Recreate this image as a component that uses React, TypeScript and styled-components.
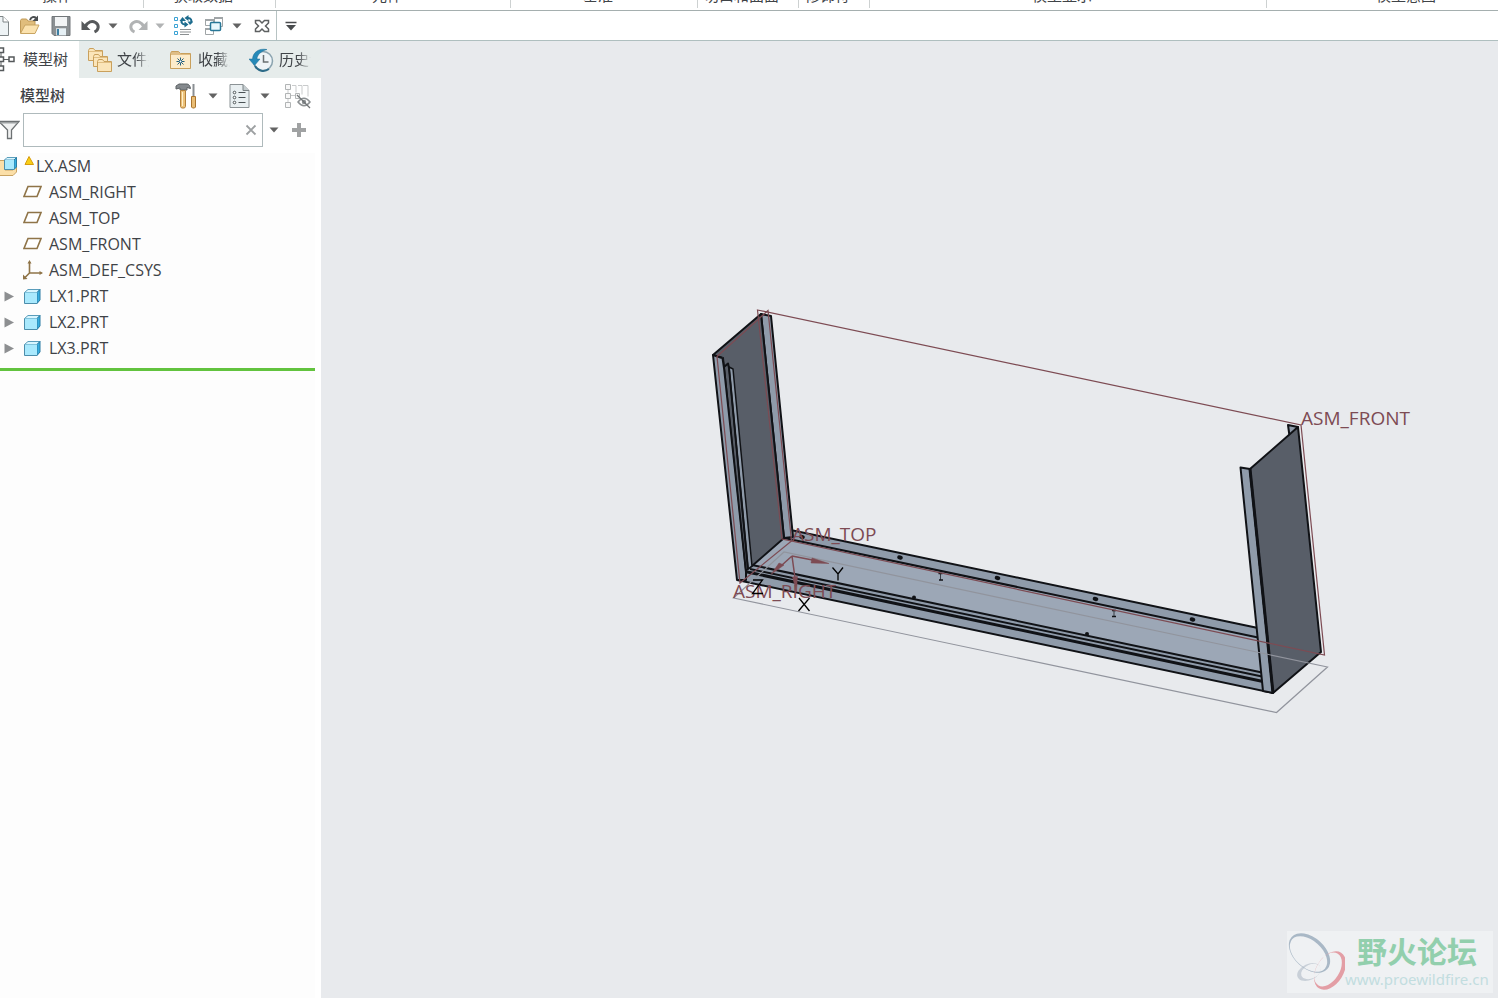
import React, { useState } from 'react';
import styled, { createGlobalStyle } from 'styled-components';

const GlobalStyle = createGlobalStyle`
  * { box-sizing: border-box; }
  html, body { margin: 0; background: #e8eaed; }
  body, button, input {
    font-family: "Open Sans", "Noto Sans CJK SC", sans-serif;
    font-size: 15px;
    color: #3f4347;
  }
  button { padding: 0; border: 0; background: none; cursor: pointer; }
  svg { display: block; flex: none; }
`;

const Page = styled.div`
  display: flex;
  flex-direction: column;
  height: 100vh;
  overflow: hidden;
`;

const Ribbon = styled.div`
  display: flex;
  flex: none;
  height: 11px;
  overflow: hidden;
  background: #fff;
  border-bottom: 1px solid #a5afaf;
`;

const RibbonGroup = styled.div<{ $width?: number; $inset: number }>`
  display: flex;
  align-items: flex-end;
  flex: ${p => (p.$width ? `none` : '1')};
  width: ${p => (p.$width ? `${p.$width}px` : 'auto')};
  height: 8px;
  padding: 0 0 3px ${p => p.$inset}px;
  border-right: 1px solid #cdd1d1;
  line-height: 20px;
  white-space: nowrap;
  &:last-child { border-right: 0; }
`;

const Toolbar = styled.div`
  display: flex;
  align-items: center;
  flex: none;
  height: 30px;
  background: #fff;
  border-bottom: 1px solid #afbfbf;
`;

const ToolButton = styled.button<{ $width: number }>`
  display: flex;
  align-items: center;
  justify-content: center;
  flex: none;
  width: ${p => p.$width}px;
  height: 29px;
  overflow: hidden;
`;

const ToolDivider = styled.div`
  width: 1px;
  align-self: stretch;
  background: #b7c3c3;
`;

const Body = styled.div`
  display: flex;
  flex: 1;
  min-height: 0;
`;

const SidePanel = styled.aside`
  display: flex;
  flex-direction: column;
  flex: none;
  width: 321px;
  background: #fff;
`;

const Tabs = styled.div`
  display: flex;
  height: 37px;
  background: #e6eceb;
`;

const Tab = styled.button<{ $width: number; $active?: boolean }>`
  display: flex;
  align-items: center;
  flex: none;
  gap: ${p => (p.$active ? 8 : 5)}px;
  width: ${p => p.$width}px;
  padding-left: ${p => (p.$active ? 0 : 9)}px;
  background: ${p => (p.$active ? '#fff' : 'transparent')};
  line-height: 20px;
`;

const TabLabel = styled.span<{ $clipped?: boolean }>`
  width: ${p => (p.$clipped ? '32px' : 'auto')};
  padding-bottom: 2px;
  overflow: hidden;
  white-space: nowrap;
  ${p => p.$clipped && 'mask-image: linear-gradient(90deg, #000 60%, transparent);'}
`;

const PanelHeader = styled.div`
  display: flex;
  align-items: center;
  height: 35px;
`;

const PanelTitle = styled.h2`
  width: 172px;
  margin: 0;
  padding: 0 0 2px 20px;
  font-size: 15px;
  font-weight: 500;
  line-height: 20px;
`;

const SearchRow = styled.div`
  display: flex;
  align-items: center;
  height: 34px;
`;

const FilterSlot = styled.div`
  width: 23px;
`;

const SearchField = styled.div`
  display: flex;
  align-items: center;
  width: 240px;
  height: 34px;
  border: 1px solid #afbabc;
  background: #fff;
`;

const SearchInput = styled.input`
  flex: 1;
  min-width: 0;
  height: 30px;
  padding: 0 6px;
  border: 0;
  outline: 0;
  background: transparent;
`;

const Tree = styled.ul`
  flex: 1;
  width: 315px;
  margin: 6px 0 0;
  padding: 0;
  list-style: none;
  background: #fdfdfd;
  font-size: 16px;
`;

const TreeRow = styled.li<{ $root?: boolean }>`
  display: flex;
  align-items: center;
  gap: ${p => (p.$root ? 2 : 7)}px;
  height: 26px;
  line-height: 20px;
`;

const TreeLeafRow = styled(TreeRow)`
  padding-left: 23px;
`;

const Expander = styled.button`
  display: flex;
  align-items: center;
  flex: none;
  width: 16px;
  height: 20px;
  padding-left: 4px;
`;

const InsertMarker = styled.li`
  height: 3px;
  margin-top: 7px;
  background: #62c33e;
`;

const Viewport = styled.main`
  position: relative;
  flex: 1;
  min-width: 0;
  overflow: hidden;
  background: #e8eaed;
`;

const Scene = styled.svg`
  width: 100%;
  height: 100%;
  font-family: "Open Sans", sans-serif;
  font-size: 19px;
`;

const Watermark = styled.div`
  position: absolute;
  right: 5px;
  bottom: 5px;
  display: flex;
  width: 206px;
  height: 62px;
  background: #eff1f3;
`;

const WatermarkText = styled.div`
  display: flex;
  flex-direction: column;
  align-items: flex-start;
`;

const WatermarkName = styled.strong`
  padding: 2px 0 2px 12px;
  font: 700 30px/34px "Noto Sans CJK SC", sans-serif;
  color: #92cfad;
`;

const WatermarkUrl = styled.a`
  font: 15px/20px "Noto Sans", sans-serif;
  color: #c2dddf;
  text-decoration: none;
`;

const Caret = ({ color = '#636363' }: { color?: string }) => (
  <svg width="10" height="6" viewBox="0 0 10 6"><path d="M0.5 0.5h9L5 5.5z" fill={color} /></svg>
);

const NewIcon = () => (
  <svg width="14" height="22" viewBox="0 0 14 22">
    <path d="M-6 1.500H3L8.500 7V20.500H-6z" fill="#eef3f5" stroke="#7e8587" />
    <path d="M3 1.500V7h5.500" fill="#fff" stroke="#7e8587" />
  </svg>
);

const OpenIcon = () => (
  <svg width="22" height="22" viewBox="0 0 22 22">
    <path d="M1.500 18V5.500l1-1.500h5l1.500 2h7v4" fill="#e0bd7c" stroke="#c09a57" />
    <path d="M1.500 18.500L6 10h14l-4 8.500z" fill="#fbe2ae" stroke="#c9a562" />
    <path d="M11 5c1-3 4-4 6-2" fill="none" stroke="#4a4e50" strokeWidth="2" />
    <path d="M19 0.500V6h-5.500z" fill="#4a4e50" />
  </svg>
);

const SaveIcon = () => (
  <svg width="20" height="22" viewBox="0 0 20 22">
    <path d="M1 1.500h18v19H3l-2-2z" fill="#8b9093" stroke="#72777a" />
    <path d="M4 2h12v9H4z" fill="#f2f4f5" />
    <path d="M5 13h10v7.500H5z" fill="#cfd5d8" />
    <path d="M6 14h4v6H6z" fill="#3c7fa3" /><path d="M8 14h7v6H8z" fill="#e6f0f5" />
  </svg>
);

const UndoIcon = ({ color = '#56595b', flip = false }: { color?: string; flip?: boolean }) => (
  <svg width="20" height="18" viewBox="0 0 20 18">
    <g transform={flip ? 'translate(20 0) scale(-1 1)' : undefined}>
      <path d="M4 10C7 4.500 11 3.500 14.500 5.500c4 2.500 3.500 7.500-1 9.500" fill="none" stroke={color} strokeWidth="3" />
      <path d="M0.500 4v9h9z" fill={color} />
    </g>
  </svg>
);

const RegenerateIcon = () => (
  <svg width="20" height="22" viewBox="0 0 20 22">
    <g fill="#fff" stroke="#3ba2d4"><path d="M1.500 2.500h3v3h-3zM1.500 9.500h3v3h-3zM1.500 16.500h3v3h-3z" /></g>
    <path d="M7 14.500h11M7 17h11M7 19.500h9" stroke="#8b8f91" strokeWidth="1.200" />
    <path d="M12 9.500C8.500 9.500 8 7 9 4.500M15 3c3 0 4 2.500 3 5" fill="none" stroke="#1d6c8e" strokeWidth="2" />
    <path d="M6.500 6l3-4 3.500 4zM11.500 6.500l4 3-4 3zM15.500 0v6l-4-3zM14.500 6.500h6L17 10z" fill="#1d6c8e" />
  </svg>
);

const WindowsIcon = () => (
  <svg width="20" height="20" viewBox="0 0 20 20">
    <g fill="#fff" stroke="#a0a5a7"><path d="M1.500 3.500h8v6h-8zM10.500 1.500h8v9h-8zM1.500 12.500h8v6h-8z" /></g>
    <path d="M1 4h9M10 2h9M1 13h9" stroke="#a0a5a7" strokeWidth="2" />
    <rect x="6.500" y="6.500" width="10" height="8" rx="1" fill="#e9f7fc" stroke="#287797" strokeWidth="1.500" />
  </svg>
);

const CloseWindowIcon = () => (
  <svg width="16" height="14" viewBox="0 0 16 14">
    <path d="M1.500 1.500h4L8 4l2.500-2.500h4V4l-3 3 3 3v2.500h-4L8 10l-2.500 2.500h-4V10l3-3-3-3z" fill="#fff" stroke="#5d6061" strokeWidth="1.500" />
  </svg>
);

const MoreIcon = () => (
  <svg width="12" height="10" viewBox="0 0 12 10">
    <path d="M0.500 1.500h11" stroke="#484b4d" strokeWidth="1.500" /><path d="M1 4h10L6 9.500z" fill="#484b4d" />
  </svg>
);

const ModelTreeIcon = () => (
  <svg width="15" height="26" viewBox="0 0 15 26">
    <path d="M1 3v17M1 12.500h8" stroke="#5d6163" />
    <g fill="#fff" stroke="#55595b" strokeWidth="1.500"><path d="M-2 1h5.500v4.500H-2zM-2 10h5.500v4.500H-2zM-2 19h5.500v4.500H-2zM9 10h5v4.500H9z" /></g>
  </svg>
);

const FoldersIcon = () => (
  <svg width="24" height="24" viewBox="0 0 24 24">
    {[[0, 0], [5, 6], [9, 11]].map(([x, y]) => (
      <g key={x} transform={`translate(${x} ${y})`}>
        <path d="M0.500 2.500l1-2h4l1.500 2h7.500v10h-14z" fill="#fbe5b9" stroke="#c9a05c" />
        <path d="M1 3.500h13" stroke="#e1bf83" />
      </g>
    ))}
  </svg>
);

const FavoriteIcon = () => (
  <svg width="24" height="22" viewBox="0 0 24 22">
    <path d="M1.500 4.500l1-2h7l2 2h10v15h-20z" fill="#e0be85" stroke="#c9a05c" />
    <path d="M2 6h19v13H2z" fill="#fdecca" />
    <path d="M11.500 8.500v8M7.500 12.500h8M8.500 9.500l6 6M14.500 9.500l-6 6" stroke="#245f7c" />
    <circle cx="11.500" cy="12.500" r="1" fill="#fff" />
  </svg>
);

const HistoryIcon = () => (
  <svg width="25" height="24" viewBox="0 0 25 24">
    <circle cx="14" cy="13" r="9.500" fill="#eef4f7" stroke="#8aa3af" strokeWidth="1.500" />
    <path d="M14.500 7v7h5" fill="none" stroke="#6a7073" strokeWidth="1.500" />
    <path d="M18 1.500C10 0 4 4 3.500 11H0l5.500 6.500L11 11H8c0-4 4-8 10-9.500z" fill="#2589b8" stroke="#1b6c95" strokeWidth="0.500" />
    <path d="M6 18c3 5 9 6.500 14 3" fill="none" stroke="#2d6b88" strokeWidth="2" />
  </svg>
);

const ToolsIcon = () => (
  <svg width="22" height="26" viewBox="0 0 22 26">
    <path d="M1 3l3-2h8c2 0 3 2 3.500 4.500L12 4.500V7H5V5L1 6z" fill="#858a8e" stroke="#5d6265" />
    <path d="M5.500 7.500h5v16l-1 1.500h-3l-1-1.500z" fill="#ecc27a" stroke="#b3813d" />
    <path d="M7.500 9v14" stroke="#fff0cd" />
    <path d="M18.500 1v12" stroke="#8a8f93" strokeWidth="2" />
    <path d="M16.500 13.500h4V24l-1 1h-2l-1-1z" fill="#e9bd75" stroke="#a9742e" />
  </svg>
);

const SettingsListIcon = () => (
  <svg width="21" height="26" viewBox="0 0 21 26">
    <path d="M1 1.500h13l6 6v17H1z" fill="#e9eff1" stroke="#8b9295" />
    <path d="M14 1.500v6h6" fill="#c4cccf" stroke="#7b8285" />
    <path d="M9.500 9.500h7M9.500 14.500h7M9.500 19.500h7" stroke="#4c5356" />
    <g fill="#fff" stroke="#4c5356"><circle cx="5.500" cy="9.500" r="1.300" /><circle cx="5.500" cy="14.500" r="1.300" /><circle cx="5.500" cy="19.500" r="1.300" /></g>
  </svg>
);

const HideTreeIcon = () => (
  <svg width="28" height="26" viewBox="0 0 28 26">
    <path d="M8 2.500h4v7M14 2.500h4v9M19 2.500h5v11M4 6v15M7 12.500h5" fill="none" stroke="#c9cbcc" />
    <g fill="#f8f8f8" stroke="#b1b4b5"><path d="M1.500 1.500h5v5h-5zM1.500 10.500h5v5h-5zM1.500 19.500h5v5h-5zM11.500 10.500h4v5h-4z" /></g>
    <path d="M14 19c4-5 8-5 12 0-4 5-8 5-12 0z" fill="#fff" stroke="#8c9092" strokeWidth="1.500" />
    <circle cx="20" cy="19" r="2.200" fill="#8c9092" />
    <path d="M13 12l13 13" stroke="#707476" strokeWidth="1.200" />
  </svg>
);

const FilterIcon = () => (
  <svg width="20" height="20" viewBox="0 0 20 20">
    <path d="M-1 1.500h20L11.500 10v8.500h-4V10z" fill="#f1f2f2" stroke="#6d7173" strokeWidth="1.300" />
    <path d="M0 2h18l-1.500 1.500H1z" fill="#9ea2a3" />
  </svg>
);

const ClearIcon = () => (
  <svg width="12" height="12" viewBox="0 0 12 12"><path d="M1.500 1.500l9 9M10.500 1.500l-9 9" stroke="#9da0a2" strokeWidth="1.800" /></svg>
);

const PlusIcon = () => (
  <svg width="14" height="14" viewBox="0 0 14 14"><path d="M7 0v14M0 7h14" stroke="#a0a2a3" strokeWidth="4" /></svg>
);

const PartIcon = () => (
  <svg width="19" height="17" viewBox="0 0 19 17">
    <path d="M1.500 4.500L5 1.500h12l-3 3z" fill="#d8f6ff" stroke="#5a9dbb" />
    <path d="M14 4.500l3-3V12l-3 3.500z" fill="#35aee0" stroke="#2c7da3" />
    <path d="M1.500 4.500H14v11H1.500z" fill="#a9e9fd" />
    <path d="M1.500 4.500v11H14" fill="none" stroke="#4b8dab" />
  </svg>
);

const AssemblyIcon = () => (
  <svg width="18" height="20" viewBox="0 0 18 20">
    <path d="M-2 4.500h7V14h8l3.500-4v6L13 19.500H-2z" fill="#fbdfa8" stroke="#c9a362" />
    <path d="M4.500 4L7 1.500h9.500L14 4z" fill="#d8f6ff" stroke="#5a9dbb" />
    <path d="M14 4l2.500-2.500V11L14 13.500z" fill="#35aee0" stroke="#2c7da3" />
    <path d="M4.500 4H14v9.500H4.500z" fill="#a9e9fd" />
    <path d="M4.500 4v9.500H14" fill="none" stroke="#4b8dab" />
  </svg>
);

const WarningIcon = () => (
  <svg width="14" height="20" viewBox="0 0 14 20"><path d="M9 0.500L5 8.500h8.500z" fill="#f8ce16" stroke="#d79c0c" /></svg>
);

const PlaneIcon = () => (
  <svg width="19" height="14" viewBox="0 0 19 14"><path d="M5 1.500h13l-4 10H1z" fill="#fff" stroke="#8f7448" strokeWidth="1.600" /></svg>
);

const CsysIcon = () => (
  <svg width="19" height="20" viewBox="0 0 19 20" overflow="visible">
    <path d="M6.500 2v11M6.500 13h12M6.500 13l-5 5" fill="none" stroke="#8f7448" strokeWidth="1.600" />
    <path d="M6.500 0l2 3.500h-4zM20 13l-3.500-2v4zM0 19.500v-5l4.500 4.500z" fill="#8f7448" />
  </svg>
);

const ExpandIcon = () => (
  <svg width="10" height="11" viewBox="0 0 10 11"><path d="M0.500 0.500v10l9.500-5z" fill="#8d8f91" /></svg>
);

const ringPath = (cx: number, cy: number, rx: number, ry: number, deg: number) => {
  const dx = rx * Math.cos((deg * Math.PI) / 180);
  const dy = rx * Math.sin((deg * Math.PI) / 180);
  return `M${cx - dx} ${cy - dy}A${rx} ${ry} ${deg} 1 0 ${cx + dx} ${cy + dy}A${rx} ${ry} ${deg} 1 0 ${cx - dx} ${cy - dy}z`;
};

const ButterflyLogo = () => (
  <svg width="58" height="62" viewBox="0 0 58 62" fillRule="evenodd">
    <path d={ringPath(22, 41, 12.500, 8, -25) + ringPath(24, 40.500, 10.500, 7, -25)} fill="#c9d0d8" />
    <path d={ringPath(22.500, 22, 24, 15.500, 42) + ringPath(21.500, 23, 22, 13.500, 42)} fill="#a9b8c6" />
    <path d={ringPath(43, 39.500, 21, 13.500, -58) + ringPath(41, 38.500, 18.500, 11.500, -58)} fill="#e39ea5" />
  </svg>
);

const steel = '#8f9baa';
const dark = '#585e68';
const edge = '#101216';
const datum = '#7d4b53';

/* Three-piece sheet-metal frame with its datum planes and coordinate system. */
const Model = () => (
  <Scene role="img" aria-label="LX.ASM">
    <g transform="translate(-321 -41)">
      <g stroke={edge} strokeWidth="2" strokeLinejoin="round">
        <path d="M793 531L1258 628L1273 693L737 580L752 565L784 538z" fill={steel} stroke="none" />
        <path d="M784 538L1258 638L1263 673L752 565z" fill="#9ca7b6" stroke="none" />
        <path d="M793 530.500L1258 628M784 538L1258 637.500M752 565L1262 672.500M750 569L1262 676.500" fill="none" />
        <path d="M745 571.500L1263 681.500" strokeWidth="3" />
        <path d="M737 580L1273 693" />
        <path d="M761 314L771 316L793 537L784 538z" fill={steel} />
        <path d="M713 355L761 314L784 538L752 566L745 571L723 358z" fill={dark} />
        <path d="M713 355L723 358L746 580L737 580z" fill={steel} stroke="none" />
        <path d="M722 358L713 355L737 580H746V572" fill="none" />
        <path d="M729 367L733 369L752 566L748 569z" fill={steel} strokeWidth="1.500" />
        <path d="M722.500 358L724 368L746 572M724 367L728 363.500L729 368L748 569" fill="none" strokeWidth="2" />
        <path d="M1288 425L1298 427L1289.500 436z" fill={steel} />
        <path d="M1240.500 467.500L1250 469L1273 693L1263 691z" fill={steel} />
        <path d="M1250 469L1298 427L1321 652L1273 693z" fill={dark} />
        <path d="M1250 469L1273 693" strokeWidth="3" />
      </g>
      <g fill={edge}>
        {[[802, 537], [900, 557.5], [997.5, 578], [1095.5, 599], [1192.5, 619.5]].map(([x, y]) => (
          <ellipse key={x} cx={x} cy={y} rx="2.800" ry="2" transform={`rotate(15 ${x} ${y})`} />
        ))}
        <circle cx="914" cy="597.500" r="2" /><circle cx="1087" cy="634" r="2" />
      </g>
      <g stroke={edge}>
        <path d="M938.500 573.500h4M939 580h4M1112 610.500h4M1112 616.500h4" strokeWidth="1.500" />
        <path d="M940.500 573v7M1114 610v7" strokeWidth="0.700" />
      </g>
      <path d="M733.500 598L1276.500 712.500L1327.500 667L784 552z" fill="none" stroke="#91949d" strokeWidth="1.200" />
      <g fill="none" stroke={datum} strokeWidth="1.200">
        <path d="M757.500 310L1301 425L1324.500 655L782 539z" />
        <path d="M717 356.500L768 310.500L791.500 541L740 583z" />
      </g>
      <g stroke={datum} fill={datum} strokeWidth="1.500">
        <path d="M792 556L815 560.500M792 556L782 565M792 556L795 578" />
        <path d="M812 558L829 563.500L811 563zM784 565L771 574.500L779 563zM792.500 577L797.500 576.500L796.500 592z" strokeWidth="0.500" />
      </g>
      <g fill={datum}>
        <text x="792" y="541">ASM_TOP</text>
        <text x="733" y="598">ASM_RIGHT</text>
        <text x="1301" y="425">ASM_FRONT</text>
      </g>
      <g fill="none" stroke="#000" strokeWidth="1.300">
        <path d="M832.500 567.500L838 574L843 567.500M838 574V580.500" />
        <path d="M753 580H762.500L752.500 593.500H763" />
        <path d="M799 598L809.500 611M809.500 598L798.500 611" />
      </g>
    </g>
  </Scene>
);

const ribbonGroups = [
  { name: '操作', width: 144, inset: 42 },
  { name: '获取数据', width: 132, inset: 29 },
  { name: '元件', width: 235, inset: 96 },
  { name: '基准', width: 187, inset: 72 },
  { name: '切口和曲面', width: 101, inset: 6 },
  { name: '修饰符', width: 71, inset: 6 },
  { name: '模型显示', width: undefined, inset: 162 },
  { name: '模型意图', width: 231, inset: 109 },
];

const planes = ['ASM_RIGHT', 'ASM_TOP', 'ASM_FRONT'];
const parts = ['LX1.PRT', 'LX2.PRT', 'LX3.PRT'];

export default function App() {
  const [query, setQuery] = useState('');
  return (
    <>
      <GlobalStyle />
      <Page>
        <Ribbon>
          {ribbonGroups.map(g => (
            <RibbonGroup key={g.name} $width={g.width} $inset={g.inset}>{g.name}</RibbonGroup>
          ))}
        </Ribbon>
        <Toolbar role="toolbar">
          <ToolButton $width={14} aria-label="新建"><NewIcon /></ToolButton>
          <ToolButton $width={32} aria-label="打开"><OpenIcon /></ToolButton>
          <ToolButton $width={30} aria-label="保存"><SaveIcon /></ToolButton>
          <ToolButton $width={30} aria-label="撤销"><UndoIcon /></ToolButton>
          <ToolButton $width={14} aria-label="撤销列表"><Caret /></ToolButton>
          <ToolButton $width={35} aria-label="重做"><UndoIcon color="#b1b3b4" flip /></ToolButton>
          <ToolButton $width={10} aria-label="重做列表"><Caret color="#b1b3b4" /></ToolButton>
          <ToolButton $width={36} aria-label="重新生成"><RegenerateIcon /></ToolButton>
          <ToolButton $width={26} aria-label="窗口"><WindowsIcon /></ToolButton>
          <ToolButton $width={20} aria-label="窗口列表"><Caret /></ToolButton>
          <ToolButton $width={29} aria-label="关闭"><CloseWindowIcon /></ToolButton>
          <ToolDivider />
          <ToolButton $width={28} aria-label="自定义"><MoreIcon /></ToolButton>
        </Toolbar>
        <Body>
          <SidePanel>
            <Tabs role="tablist">
              <Tab role="tab" aria-selected $width={79} $active><ModelTreeIcon /><TabLabel>模型树</TabLabel></Tab>
              <Tab role="tab" $width={81}><FoldersIcon /><TabLabel $clipped>文件夹</TabLabel></Tab>
              <Tab role="tab" $width={80}><FavoriteIcon /><TabLabel $clipped>收藏夹</TabLabel></Tab>
              <Tab role="tab" $width={81}><HistoryIcon /><TabLabel $clipped>历史记录</TabLabel></Tab>
            </Tabs>
            <PanelHeader>
              <PanelTitle>模型树</PanelTitle>
              <ToolButton $width={28} aria-label="设置"><ToolsIcon /></ToolButton>
              <ToolButton $width={26} aria-label="设置列表"><Caret /></ToolButton>
              <ToolButton $width={27} aria-label="显示"><SettingsListIcon /></ToolButton>
              <ToolButton $width={24} aria-label="显示列表"><Caret /></ToolButton>
              <ToolButton $width={41} aria-label="隐藏树"><HideTreeIcon /></ToolButton>
            </PanelHeader>
            <SearchRow>
              <FilterSlot><FilterIcon /></FilterSlot>
              <SearchField>
                <SearchInput aria-label="搜索" value={query} onChange={e => setQuery(e.target.value)} />
                <ToolButton $width={22} aria-label="清除" onClick={() => setQuery('')}><ClearIcon /></ToolButton>
              </SearchField>
              <ToolButton $width={22} aria-label="搜索选项"><Caret /></ToolButton>
              <ToolButton $width={28} aria-label="添加"><PlusIcon /></ToolButton>
            </SearchRow>
            <Tree>
              <TreeRow $root><AssemblyIcon /><WarningIcon />LX.ASM</TreeRow>
              {planes.map(name => <TreeLeafRow key={name}><PlaneIcon />{name}</TreeLeafRow>)}
              <TreeLeafRow><CsysIcon />ASM_DEF_CSYS</TreeLeafRow>
              {parts.map(name => (
                <TreeRow key={name}>
                  <Expander aria-label={`展开 ${name}`}><ExpandIcon /></Expander>
                  <PartIcon />{name}
                </TreeRow>
              ))}
              <InsertMarker />
            </Tree>
          </SidePanel>
          <Viewport>
            <Model />
            <Watermark>
              <ButterflyLogo />
              <WatermarkText>
                <WatermarkName>野火论坛</WatermarkName>
                <WatermarkUrl href="http://www.proewildfire.cn">www.proewildfire.cn</WatermarkUrl>
              </WatermarkText>
            </Watermark>
          </Viewport>
        </Body>
      </Page>
    </>
  );
}
